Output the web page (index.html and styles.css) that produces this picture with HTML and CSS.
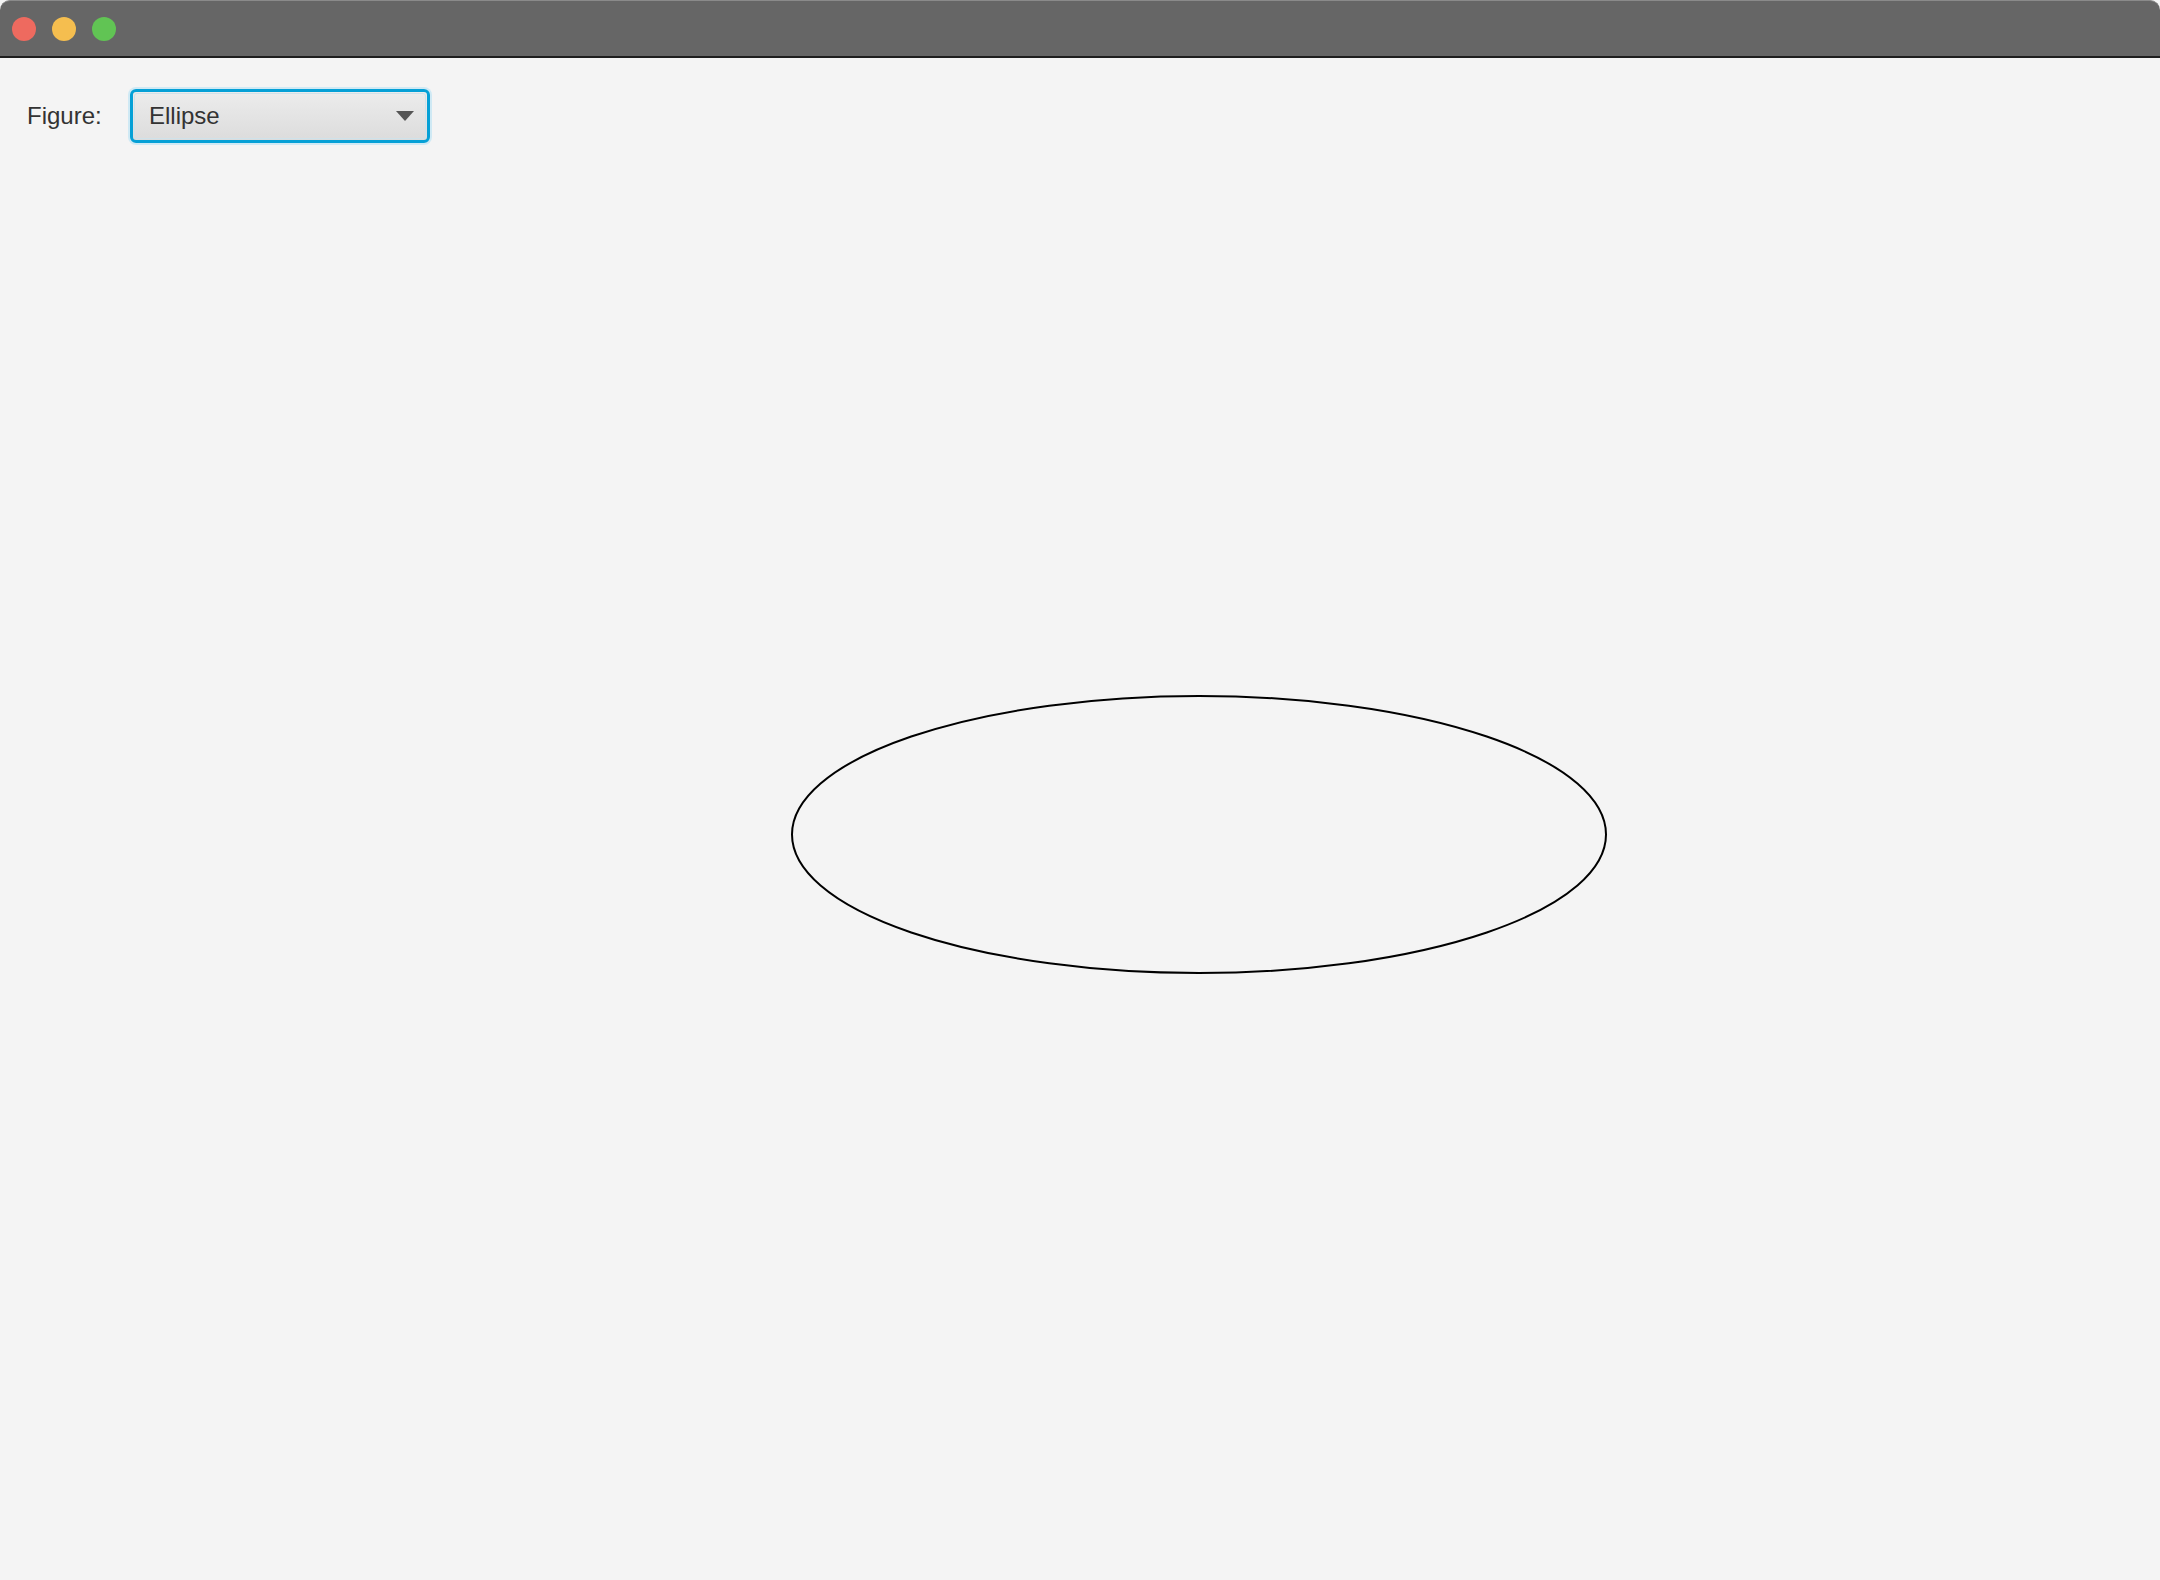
FILE: index.html
```html
<!DOCTYPE html>
<html>
<head>
<meta charset="utf-8">
<link rel="stylesheet" href="styles.css">
</head>
<body>
<div class="window">
  <div class="titlebar">
    <span class="light red"></span>
    <span class="light yellow"></span>
    <span class="light green"></span>
  </div>
  <div class="content">
    <div class="toolbar">
      <span class="label">Figure:</span>
      <div class="combo">
        <div class="combo-inner">
          <span class="combo-text">Ellipse</span>
          <span class="arrow"></span>
        </div>
      </div>
    </div>
    <svg class="canvas" viewBox="0 0 2160 1522" preserveAspectRatio="none">
      <ellipse cx="1199" cy="776.5" rx="407" ry="138.5" fill="none" stroke="#000" stroke-width="2"/>
    </svg>
  </div>
</div>
</body>
</html>
```
FILE: styles.css
```css
html, body {
  margin: 0;
  padding: 0;
  width: 2160px;
  height: 1580px;
  overflow: hidden;
  background: #f4f4f4;
}
.window {
  width: 2160px;
  height: 1580px;
  display: flex;
  flex-direction: column;
  font-family: "Liberation Sans", Arial, sans-serif;
}
.titlebar {
  height: 55px;
  background: #666666;
  border-top: 1px solid #8a8a8a;
  border-bottom: 2px solid #1e1e1e;
  border-top-left-radius: 10px;
  border-top-right-radius: 10px;
  display: flex;
  align-items: center;
  gap: 16px;
  padding-left: 12px;
  box-sizing: content-box;
}
.light {
  width: 24px;
  height: 24px;
  border-radius: 50%;
  display: block;
}
.red { background: #ee6a5f; }
.yellow { background: #f5be4f; }
.green { background: #61c454; }
.content {
  position: relative;
  flex: 1;
  background: #f4f4f4;
}
.toolbar {
  display: flex;
  align-items: center;
  padding: 31px 0 0 27px;
  position: relative;
  z-index: 1;
}
.label {
  font-size: 24px;
  color: #333;
  width: 103px;
}
.combo {
  width: 300px;
  height: 54px;
  box-sizing: border-box;
  border: 3px solid #05a0d6;
  border-radius: 6px;
  box-shadow: 0 0 0 2px #cfe9f4;
  background: linear-gradient(#ececec, #dcdcdc);
  padding: 1px;
}
.combo-inner {
  height: 100%;
  box-sizing: border-box;
  border: 1px solid #cfe2ea;
  border-radius: 3px;
  display: flex;
  align-items: center;
  justify-content: space-between;
  padding: 0 11px 0 14px;
}
.combo-text {
  font-size: 24px;
  color: #333;
}
.arrow {
  width: 0;
  height: 0;
  border-left: 9px solid transparent;
  border-right: 9px solid transparent;
  border-top: 10px solid #555;
}
.canvas {
  position: absolute;
  left: 0;
  top: 0;
  width: 2160px;
  height: 1522px;
}
```
